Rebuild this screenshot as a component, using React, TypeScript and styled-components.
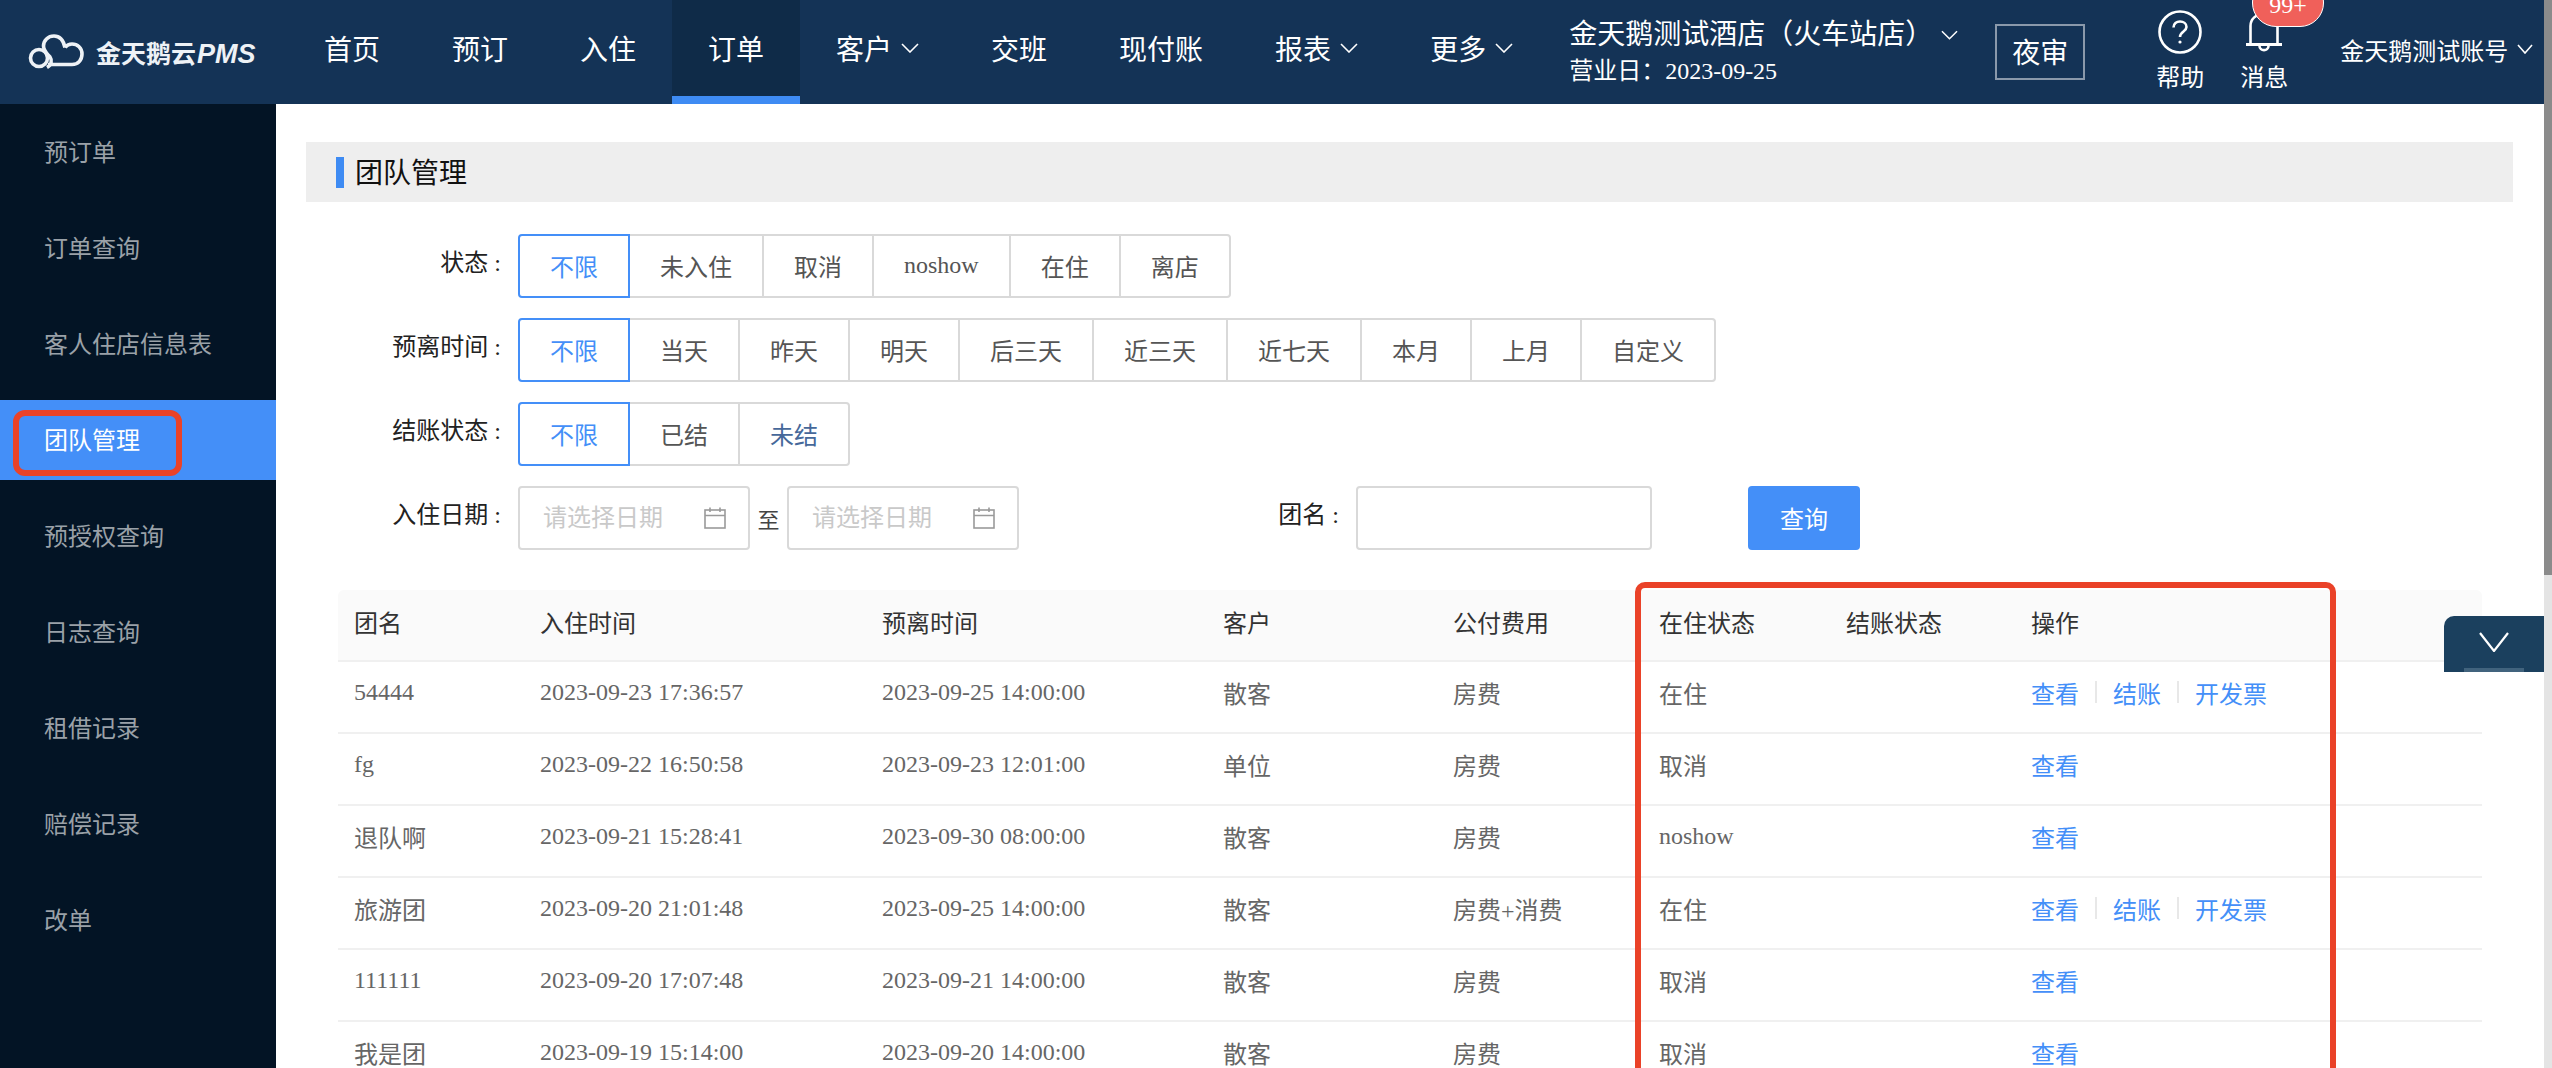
import React from 'react';
import styled, { createGlobalStyle } from 'styled-components';

const FONT = `"Liberation Serif", "Noto Sans CJK SC", serif`;

const GlobalStyle = createGlobalStyle`
  html, body {
    margin: 0;
    padding: 0;
    height: 100%;
    overflow: hidden;
    background: #fff;
  }
  * {
    box-sizing: border-box;
  }
`;

const Root = styled.div`
  display: flex;
  width: 2552px;
  height: 1068px;
  font-family: ${FONT};
  overflow: hidden;
`;

const Page = styled.div`
  position: relative;
  flex: 1;
  min-width: 0;
  display: flex;
  flex-direction: column;
  overflow: hidden;
`;

const ScrollTrack = styled.div`
  flex: none;
  width: 8px;
  background: #e4e4e4;
`;

const ScrollThumb = styled.div`
  height: 575px;
  background: #8b8b8b;
`;

/* header */
const Header = styled.header`
  flex: none;
  height: 104px;
  display: flex;
  align-items: stretch;
  background: #143356;
  color: #fff;
`;

const Logo = styled.div`
  flex: none;
  width: 288px;
  display: flex;
  align-items: center;
  padding-left: 28px;
  gap: 12px;
`;

const LogoText = styled.span`
  font-family: "Noto Sans CJK SC", sans-serif;
  font-size: 25px;
  font-weight: 700;
  white-space: nowrap;
  color: #eef2f6;
  em {
    font-family: "Liberation Sans", sans-serif;
    font-style: italic;
    font-size: 27px;
    margin-left: 1px;
  }
`;

const Nav = styled.nav`
  flex: none;
  display: flex;
`;

const NavItem = styled.a<{ $active?: boolean }>`
  display: flex;
  align-items: center;
  justify-content: center;
  gap: 9px;
  padding: 0 36px ${p => (p.$active ? '0' : '8px')};
  font-size: 28px;
  white-space: nowrap;
  background: ${p => (p.$active ? '#0f2b48' : 'transparent')};
  border-bottom: ${p => (p.$active ? '8px solid #3e8bf3' : 'none')};
`;

const Hotel = styled.div`
  flex: none;
  width: 389px;
  margin-left: 20px;
  padding-top: 15px;
  display: flex;
  flex-direction: column;
`;

const HotelName = styled.div`
  display: flex;
  align-items: center;
  font-size: 28px;
  line-height: 40px;
  white-space: nowrap;
  gap: 8px;
`;

const BusinessDay = styled.div`
  font-size: 24px;
  line-height: 32px;
  white-space: nowrap;
`;

const AuditButton = styled.button`
  flex: none;
  align-self: center;
  width: 90px;
  height: 56px;
  margin-left: 37px;
  padding: 0 0 2px;
  background: transparent;
  border: 2px solid rgba(255, 255, 255, 0.5);
  color: #fff;
  font-family: ${FONT};
  font-size: 28px;
`;

const Tools = styled.div`
  flex: none;
  display: flex;
  gap: 36px;
  margin-left: 71px;
`;

const ToolItem = styled.div`
  position: relative;
  width: 48px;
  height: 104px;
  display: flex;
  flex-direction: column;
  align-items: center;
  font-size: 24px;
  line-height: 28px;
  white-space: nowrap;
  svg {
    display: block;
    flex: none;
  }
`;

const ToolIcon = styled.div`
  height: 64px;
  display: flex;
  align-items: flex-start;
  padding-top: 10px;
`;

const Badge = styled.span`
  position: absolute;
  left: 12px;
  top: -22px;
  width: 72px;
  height: 49px;
  padding-top: 14px;
  border: 1.5px solid #fff;
  border-radius: 24px;
  background: #f0605a;
  color: #fff;
  font-size: 24px;
  line-height: 24px;
  text-align: center;
`;

const Account = styled.div`
  flex: none;
  margin-left: 52px;
  padding-bottom: 6px;
  display: flex;
  align-items: center;
  gap: 9px;
  font-size: 24px;
  white-space: nowrap;
`;

/* body */
const Body = styled.div`
  flex: 1;
  min-height: 0;
  display: flex;
`;

const Sidebar = styled.aside`
  flex: none;
  width: 276px;
  padding-top: 8px;
  display: flex;
  flex-direction: column;
  gap: 16px;
  background: #031425;
`;

const SideItem = styled.a<{ $active?: boolean }>`
  position: relative;
  flex: none;
  height: 80px;
  display: flex;
  align-items: center;
  padding: 0 0 3px 44px;
  font-family: "Noto Sans CJK SC", sans-serif;
  font-size: 24px;
  color: ${p => (p.$active ? '#fff' : '#9aa1a8')};
  background: ${p => (p.$active ? '#448ff8' : 'transparent')};
`;

const SideMark = styled.span`
  position: absolute;
  left: 13px;
  top: 10px;
  width: 169px;
  height: 66px;
  border: 6px solid #ea4228;
  border-radius: 12px;
`;

const Main = styled.main`
  flex: 1;
  min-width: 0;
  padding: 38px 31px 0 30px;
`;

const PanelTitle = styled.div`
  height: 60px;
  display: flex;
  align-items: center;
  gap: 12px;
  padding-left: 30px;
  background: #eee;
  font-family: "Noto Sans CJK SC", sans-serif;
  font-size: 28px;
  line-height: 1;
  color: #111;
  &::before {
    content: '';
    width: 8px;
    height: 31px;
    background: #3e8bf3;
  }
`;

const PanelTitleText = styled.span`
  margin: -3px 0 0 -1px;
`;

const Filters = styled.div`
  margin-top: 32px;
  display: flex;
  flex-direction: column;
  gap: 20px;
`;

const FilterRow = styled.div`
  display: flex;
  align-items: center;
  height: 64px;
`;

const Label = styled.label<{ $width?: number }>`
  flex: none;
  width: ${p => p.$width ?? 196}px;
  margin-right: 16px;
  padding: 0 1px 12px 0;
  text-align: right;
  font-size: 24px;
  color: #222;
  white-space: nowrap;
  &::after {
    content: ':';
    margin-left: 6px;
  }
`;

const Segments = styled.div`
  display: flex;
  height: 64px;
`;

const Segment = styled.button<{ $active?: boolean; $tone?: string }>`
  position: relative;
  z-index: ${p => (p.$active ? 1 : 0)};
  height: 64px;
  margin: 0 0 0 -2px;
  padding: 0 30px 2px;
  background: #fff;
  border: 2px solid ${p => (p.$active ? '#448ff8' : '#d9d9d9')};
  font-family: ${FONT};
  font-size: 24px;
  color: ${p => (p.$active ? '#448ff8' : p.$tone ?? '#555')};
  white-space: nowrap;
  &:first-child {
    margin-left: 0;
    border-radius: 4px 0 0 4px;
  }
  &:last-child {
    border-radius: 0 4px 4px 0;
  }
`;

const DateBox = styled.div`
  flex: none;
  width: 232px;
  height: 64px;
  display: flex;
  align-items: center;
  padding: 0 23px;
  border: 2px solid #d9d9d9;
  border-radius: 4px;
`;

const DateInput = styled.input`
  flex: 1;
  min-width: 0;
  border: none;
  outline: none;
  padding: 0;
  font-family: ${FONT};
  font-size: 24px;
  background: transparent;
  &::placeholder {
    color: #c9c9c9;
    opacity: 1;
  }
`;

const Between = styled.span`
  flex: none;
  width: 37px;
  text-align: center;
  font-size: 22px;
  color: #444;
`;

const NameInput = styled.input`
  flex: none;
  width: 296px;
  height: 64px;
  border: 2px solid #d9d9d9;
  border-radius: 4px;
  outline: none;
`;

const QueryButton = styled.button`
  flex: none;
  width: 112px;
  height: 64px;
  margin-left: 96px;
  padding: 0 0 2px;
  border: none;
  border-radius: 4px;
  background: #448ff8;
  color: #fff;
  font-family: ${FONT};
  font-size: 24px;
`;

const TableWrap = styled.div`
  position: relative;
  margin: 40px 31px 0 32px;
`;

const Table = styled.table`
  width: 100%;
  table-layout: fixed;
  border-collapse: separate;
  border-spacing: 0;
  font-size: 24px;
`;

const Col = styled.col<{ $w: number }>`
  width: ${p => p.$w}px;
`;

const Th = styled.th`
  height: 72px;
  padding: 0 16px 7px;
  background: #fafafa;
  border-bottom: 2px solid #f0f0f0;
  text-align: left;
  font-weight: 400;
  color: #333;
  &:first-child {
    border-top-left-radius: 6px;
  }
  &:last-child {
    border-top-right-radius: 6px;
  }
`;

const Td = styled.td`
  height: 72px;
  padding: 0 16px 10px;
  border-bottom: 2px solid #f0f0f0;
  color: #666;
  white-space: nowrap;
`;

const Ops = styled.div`
  display: flex;
  align-items: center;
  gap: 16px;
`;

const OpLink = styled.a`
  color: #448ff8;
`;

const OpSep = styled.span`
  width: 2px;
  height: 22px;
  background: #e8e8e8;
`;

const TableMark = styled.div`
  position: absolute;
  left: 1297px;
  top: -8px;
  width: 701px;
  height: 540px;
  border: 6px solid #ea4228;
  border-radius: 10px;
  pointer-events: none;
`;

const FloatTab = styled.div`
  position: absolute;
  right: 0;
  top: 616px;
  width: 100px;
  height: 56px;
  display: flex;
  align-items: center;
  justify-content: center;
  padding-bottom: 4px;
  background: #1b405e;
  border-top-left-radius: 10px;
  &::after {
    content: '';
    position: absolute;
    left: 20px;
    bottom: 0;
    width: 60px;
    height: 4px;
    background: #41637d;
  }
`;

const Chevron = ({ w = 18, h = 10, sw = 1.6 }: { w?: number; h?: number; sw?: number }) => (
  <svg width={w} height={h} viewBox={`0 0 ${w} ${h}`} fill="none">
    <path d={`M1 1 L${w / 2} ${h - 1} L${w - 1} 1`} stroke="#fff" strokeWidth={sw} />
  </svg>
);

const CloudLogo = () => (
  <svg width="56" height="36" viewBox="0 0 56 36" fill="none" stroke="#eef2f6" strokeWidth="3.6">
    <circle cx="11" cy="24" r="8.5" />
    <path d="M20 30.5 H44 C50.5 30.5 54 25.5 54 20 C54 14 49.5 10 44 10 C41 10 39 11 37 13.5" />
    <path d="M37 13.5 C35.5 6.5 31.5 2 26 2 C20 2 15.5 6.5 15.5 12 C15.5 17 19.5 20 22 23 C24.5 26.5 23.5 31 19 33.5" />
  </svg>
);

const HelpIcon = () => (
  <svg width="44" height="44" viewBox="0 0 44 44" fill="none" stroke="#fff">
    <circle cx="22" cy="22" r="20.5" strokeWidth="2.6" />
    <path d="M15.5 17.5 C15.5 13.5 18.5 11.5 22 11.5 C25.5 11.5 28.5 13.5 28.5 17 C28.5 21.5 22 21.5 22 27" strokeWidth="2.6" />
    <circle cx="22" cy="32" r="1.6" fill="#fff" stroke="none" />
  </svg>
);

const BellIcon = () => (
  <svg width="38" height="44" viewBox="0 0 38 44" fill="none" stroke="#fff" strokeWidth="2.6">
    <path d="M5.5 34 V16 C5.5 9 11 4 19 4 C27 4 32.5 9 32.5 16 V34" />
    <path d="M1 34.5 H37" strokeWidth="3" />
    <path d="M14.5 36 C14.5 41.5 23.5 41.5 23.5 36" />
  </svg>
);

const CalendarGlyph = styled.svg`
  flex: none;
  margin-right: -1px;
`;

const CalendarIcon = () => (
  <CalendarGlyph width="22" height="22" viewBox="0 0 22 22" fill="none" stroke="#9a9a9a" strokeWidth="1.6">
    <rect x="1" y="3" width="20" height="18" />
    <path d="M1 8.5 H21 M6 0.5 V5 M16 0.5 V5" />
  </CalendarGlyph>
);

const SIDE_ITEMS = ['预订单', '订单查询', '客人住店信息表', '团队管理', '预授权查询', '日志查询', '租借记录', '赔偿记录', '改单'];

const NAV_ITEMS: { label: string; active?: boolean; menu?: boolean }[] = [
  { label: '首页' },
  { label: '预订' },
  { label: '入住' },
  { label: '订单', active: true },
  { label: '客户', menu: true },
  { label: '交班' },
  { label: '现付账' },
  { label: '报表', menu: true },
  { label: '更多', menu: true },
];

const FILTERS: { label: string; options: string[] }[] = [
  { label: '状态', options: ['不限', '未入住', '取消', 'noshow', '在住', '离店'] },
  { label: '预离时间', options: ['不限', '当天', '昨天', '明天', '后三天', '近三天', '近七天', '本月', '上月', '自定义'] },
  { label: '结账状态', options: ['不限', '已结', '未结'] },
];

const COLUMNS = [
  { title: '团名', width: 186 },
  { title: '入住时间', width: 342 },
  { title: '预离时间', width: 341 },
  { title: '客户', width: 230 },
  { title: '公付费用', width: 206 },
  { title: '在住状态', width: 187 },
  { title: '结账状态', width: 185 },
  { title: '操作', width: 467 },
];

const ROWS = [
  ['54444', '2023-09-23 17:36:57', '2023-09-25 14:00:00', '散客', '房费', '在住'],
  ['fg', '2023-09-22 16:50:58', '2023-09-23 12:01:00', '单位', '房费', '取消'],
  ['退队啊', '2023-09-21 15:28:41', '2023-09-30 08:00:00', '散客', '房费', 'noshow'],
  ['旅游团', '2023-09-20 21:01:48', '2023-09-25 14:00:00', '散客', '房费+消费', '在住'],
  ['111111', '2023-09-20 17:07:48', '2023-09-21 14:00:00', '散客', '房费', '取消'],
  ['我是团', '2023-09-19 15:14:00', '2023-09-20 14:00:00', '散客', '房费', '取消'],
];

export default function App() {
  return (
    <>
      <GlobalStyle />
      <Root>
        <Page>
          <Header>
            <Logo>
              <CloudLogo />
              <LogoText>金天鹅云<em>PMS</em></LogoText>
            </Logo>
            <Nav>
              {NAV_ITEMS.map(item => (
                <NavItem key={item.label} $active={item.active}>
                  {item.label}
                  {item.menu && <Chevron />}
                </NavItem>
              ))}
            </Nav>
            <Hotel>
              <HotelName>
                金天鹅测试酒店（火车站店）
                <Chevron />
              </HotelName>
              <BusinessDay>营业日：2023-09-25</BusinessDay>
            </Hotel>
            <AuditButton>夜审</AuditButton>
            <Tools>
              <ToolItem>
                <ToolIcon><HelpIcon /></ToolIcon>
                帮助
              </ToolItem>
              <ToolItem>
                <ToolIcon><BellIcon /></ToolIcon>
                消息
                <Badge>99+</Badge>
              </ToolItem>
            </Tools>
            <Account>
              金天鹅测试账号
              <Chevron w={16} />
            </Account>
          </Header>
          <Body>
            <Sidebar>
              {SIDE_ITEMS.map(name => (
                <SideItem key={name} $active={name === '团队管理'}>
                  {name}
                  {name === '团队管理' && <SideMark />}
                </SideItem>
              ))}
            </Sidebar>
            <Main>
              <PanelTitle><PanelTitleText>团队管理</PanelTitleText></PanelTitle>
              <Filters>
                {FILTERS.map(filter => (
                  <FilterRow key={filter.label}>
                    <Label>{filter.label}</Label>
                    <Segments>
                      {filter.options.map((opt, i) => (
                        <Segment
                          key={opt}
                          $active={i === 0}
                          $tone={filter.label === '结账状态' && opt === '未结' ? '#46689a' : undefined}
                        >
                          {opt}
                        </Segment>
                      ))}
                    </Segments>
                  </FilterRow>
                ))}
                <FilterRow>
                  <Label>入住日期</Label>
                  <DateBox>
                    <DateInput placeholder="请选择日期" />
                    <CalendarIcon />
                  </DateBox>
                  <Between>至</Between>
                  <DateBox>
                    <DateInput placeholder="请选择日期" />
                    <CalendarIcon />
                  </DateBox>
                  <Label $width={321}>团名</Label>
                  <NameInput />
                  <QueryButton>查询</QueryButton>
                </FilterRow>
              </Filters>
              <TableWrap>
                <Table>
                  <colgroup>
                    {COLUMNS.map(col => <Col key={col.title} $w={col.width} />)}
                  </colgroup>
                  <thead>
                    <tr>
                      {COLUMNS.map(col => <Th key={col.title}>{col.title}</Th>)}
                    </tr>
                  </thead>
                  <tbody>
                    {ROWS.map(row => (
                      <tr key={row[0]}>
                        {row.map((cell, i) => <Td key={i}>{cell}</Td>)}
                        <Td />
                        <Td>
                          <Ops>
                            <OpLink>查看</OpLink>
                            {row[5] === '在住' && (
                              <>
                                <OpSep />
                                <OpLink>结账</OpLink>
                                <OpSep />
                                <OpLink>开发票</OpLink>
                              </>
                            )}
                          </Ops>
                        </Td>
                      </tr>
                    ))}
                  </tbody>
                </Table>
                <TableMark />
              </TableWrap>
            </Main>
          </Body>
          <FloatTab>
            <Chevron w={30} h={20} sw={2.2} />
          </FloatTab>
        </Page>
        <ScrollTrack>
          <ScrollThumb />
        </ScrollTrack>
      </Root>
    </>
  );
}
